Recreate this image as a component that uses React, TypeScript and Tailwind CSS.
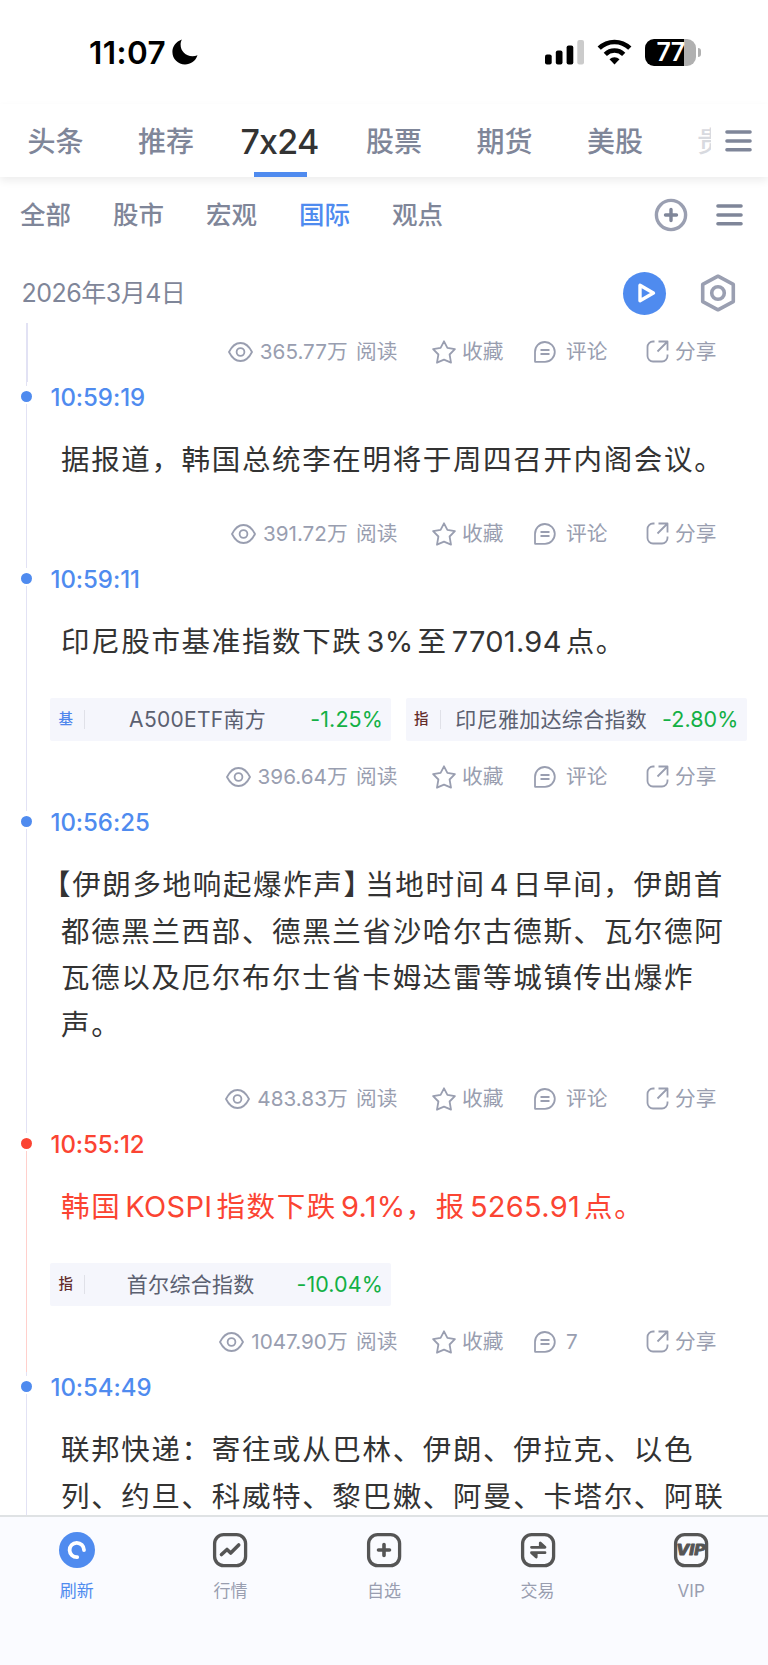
import type { ReactNode } from "react";

type Quote = { tag: string; tagColor: string; name: string; change: string };

type NewsItem = {
  time: string;
  lines: string[];
  reads?: string;
  comments?: string;
  important?: boolean;
  quotes?: Quote[];
};

const channels = ["头条", "推荐", "7x24", "股票", "期货", "美股"];
const filters = ["全部", "股市", "宏观", "国际", "观点"];

const news: NewsItem[] = [
  { time: "10:59:19", lines: ["据报道，韩国总统李在明将于周四召开内阁会议。"], reads: "391.72万" },
  {
    time: "10:59:11",
    lines: ["印尼股市基准指数下跌3%至7701.94点。"],
    reads: "396.64万",
    quotes: [
      { tag: "基", tagColor: "text-[#4f86ec]", name: "A500ETF南方", change: "-1.25%" },
      { tag: "指", tagColor: "text-[#642d2b]", name: "印尼雅加达综合指数", change: "-2.80%" },
    ],
  },
  {
    time: "10:56:25",
    lines: [
      "【伊朗多地响起爆炸声】当地时间4日早间，伊朗首",
      "都德黑兰西部、德黑兰省沙哈尔古德斯、瓦尔德阿",
      "瓦德以及厄尔布尔士省卡姆达雷等城镇传出爆炸",
      "声。",
    ],
    reads: "483.83万",
  },
  {
    time: "10:55:12",
    lines: ["韩国KOSPI指数下跌9.1%，报5265.91点。"],
    reads: "1047.90万",
    comments: "7",
    important: true,
    quotes: [{ tag: "指", tagColor: "text-[#642d2b]", name: "首尔综合指数", change: "-10.04%" }],
  },
  {
    time: "10:54:49",
    lines: ["联邦快递：寄往或从巴林、伊朗、伊拉克、以色", "列、约旦、科威特、黎巴嫩、阿曼、卡塔尔、阿联"],
  },
];

function MenuIcon() {
  return (
    <svg className="block h-[24px] w-[27px]" viewBox="0 0 27 24" stroke="#7f8699" strokeWidth="3.4" strokeLinecap="round">
      <path d="M1.9 3h23.2M1.9 12h23.2M1.9 20.8h23.2" />
    </svg>
  );
}

function StatusBar() {
  return (
    <div className="flex h-[104px] items-center pl-[89px] pr-[67px] text-black">
      <span className="pt-[2px] text-[31.5px] font-semibold leading-[40px] tracking-[0.4px]">11:07</span>
      <svg className="ml-[6px] h-[26px] w-[26px]" viewBox="0 0 26 26">
        <path d="M10 0.600C3.800 2.600 0.400 7.600 0.400 13c0 7 5.600 12.400 12.600 12.400 5.600 0 10.600-3.400 12.500-9.200-1.600 0.700-3.300 1-5 1C13.600 17.200 8.600 12.300 8.600 5.600c0-1.800 0.500-3.600 1.400-5z" />
      </svg>
      <svg className="ml-auto h-[25px] w-[39px]" viewBox="0 0 39 25">
        <rect x="0" y="14.500" width="6.700" height="10" rx="2" />
        <rect x="10.800" y="10.500" width="6.700" height="14" rx="2" />
        <rect x="21.600" y="5.500" width="6.700" height="19" rx="2" />
        <rect x="32.300" y="0" width="6.700" height="24.500" rx="2" fill="#cbcbcb" />
      </svg>
      <svg className="ml-[13px] h-[26px] w-[35px]" viewBox="0 0 35 26" fill="none" stroke="black" strokeWidth="4.600">
        <path d="M2.200 9.200a21.800 21.800 0 0 1 30.600 0" />
        <path d="M8.300 15.300a13.200 13.200 0 0 1 18.400 0" />
        <path d="M17.500 25.500l-5-5.200a7.300 7.300 0 0 1 10 0z" fill="black" stroke="none" />
      </svg>
      <div className="ml-[13px] flex items-center">
        <div className="flex h-[27px] w-[51px] items-center justify-center overflow-hidden rounded-[9px] bg-gradient-to-r from-black from-[77%] to-[#b0b0b0] to-[77%]">
          <span className="pt-px text-[25px] font-semibold leading-none tracking-[-0.6px] text-white">77</span>
        </div>
        <div className="ml-[2px] h-[9px] w-[3px] rounded-r-full bg-[#b0b0b0]" />
      </div>
    </div>
  );
}

function ChannelTabs() {
  return (
    <nav className="flex h-[73px] items-center pl-[27.5px] text-[#7f8699] shadow-[0_4px_8px_rgba(0,0,0,0.07)]">
      {channels.map((name) =>
        name === "7x24" ? (
          <div key={name} className="relative flex h-full w-[118px] items-center justify-start">
            <span className="-ml-[7.5px] pt-[2px] text-[34px] font-medium tracking-[-0.8px] text-[#333]">{name}</span>
            <span className="absolute bottom-0 left-[5.5px] h-[5px] w-[53px] bg-[#4f8bef]" />
          </div>
        ) : (
          <span key={name} className={`pt-[3px] text-[28px] font-medium ${name === "推荐" ? "w-[110px]" : name === "美股" ? "w-[111px]" : "w-[110.5px]"}`}>
            {name}
          </span>
        ),
      )}
      <div className="w-[13px] overflow-hidden whitespace-nowrap pt-[3px] text-[28px] font-medium opacity-30">
        <span className="-ml-px">贵</span>
      </div>
      <div className="ml-[14px]">
        <MenuIcon />
      </div>
    </nav>
  );
}

function FilterTabs() {
  return (
    <div className="flex h-[76px] items-center pl-[20px] text-[25.5px] text-[#7f8699]">
      {filters.map((name) => (
        <span key={name} className={`w-[93px] pt-px font-medium ${name === "国际" ? "text-[#4f8bef]" : ""}`}>
          {name}
        </span>
      ))}
      <svg className="ml-[169px] h-[34px] w-[34px]" viewBox="0 0 34 34" fill="none" stroke="#9a9fb1" strokeWidth="3.400" strokeLinecap="round">
        <circle cx="17" cy="17" r="14.600" />
        <path d="M17 11.500v11M11.500 17h11" stroke="#7f8699" />
      </svg>
      <div className="ml-[28px]">
        <MenuIcon />
      </div>
    </div>
  );
}

function DateRow() {
  return (
    <div className="flex h-[70px] items-center pl-[21.5px] pt-[10px]">
      <span className="w-[601.5px] pt-[2px] text-[25px] tracking-[-0.5px] text-[#7f8699]">2026年3月4日</span>
      <div className="flex h-[43px] w-[43px] items-center justify-center rounded-full bg-[#4f8bef]">
        <svg className="ml-[4px] h-[20px] w-[18px]" viewBox="0 0 18 20" fill="none" stroke="white" strokeWidth="3.400" strokeLinejoin="round">
          <path d="M2 2.300v15.400L15.400 10z" />
        </svg>
      </div>
      <svg className="ml-[34px] h-[38px] w-[36px]" viewBox="0 0 36 38" fill="none" stroke="#9a9fb1" strokeWidth="3.600">
        <path d="M18 2.200l15.300 8.200v17.200L18 35.800 2.700 27.600V10.400z" strokeLinejoin="round" />
        <circle cx="18" cy="19" r="6.300" />
      </svg>
    </div>
  );
}

function MetaRow({ reads, comments = "评论" }: { reads: string; comments?: string }) {
  return (
    <div className="flex h-[30px] items-center text-[20.7px] leading-[30px] text-[#999eb0]">
      <div className="flex w-[431.5px] items-center justify-end pr-[34px]">
        <svg className="mr-[7px] h-[20px] w-[25px]" viewBox="0 0 25 20" fill="none" stroke="currentColor" strokeWidth="1.800">
          <path d="M1 10C4 4 8 1 12.500 1S21 4 24 10c-3 6-7 9-11.500 9S4 16 1 10z" strokeLinejoin="round" />
          <circle cx="12.500" cy="10" r="3.900" />
        </svg>
        <span>{reads}</span>
        <span className="ml-[8.5px]">阅读</span>
      </div>
      <div className="flex w-[101.5px] items-center">
        <svg className="mr-[6.5px] h-[24px] w-[24px]" viewBox="0 0 24 24" fill="none" stroke="currentColor" strokeWidth="1.800" strokeLinejoin="round">
          <path d="M12 1.300l3.400 6.500 7.500 1.300-5.300 5.400 1.400 8.200-7-3-7 3 1.400-8.200L1.100 9.100l7.500-1.300z" />
        </svg>
        收藏
      </div>
      <div className="flex w-[113px] items-center">
        <svg className="mr-[10px] h-[22px] w-[23px]" viewBox="0 0 23 22" fill="none" stroke="currentColor" strokeWidth="1.800" strokeLinejoin="round">
          <path d="M2.200 20.800H12A9.900 9.900 0 1 0 2 11v9.600z" />
          <path d="M7.500 9h9M7.500 13h9" />
        </svg>
        {comments}
      </div>
      <div className="flex items-center">
        <svg className="mr-[6px] h-[23px] w-[23px]" viewBox="0 0 23 23" fill="none" stroke="currentColor" strokeWidth="1.800" strokeLinejoin="round">
          <path d="M8.500 1.500H7a5.500 5.500 0 0 0-5.500 5.500v9A5.500 5.500 0 0 0 7 21.500h9a5.500 5.500 0 0 0 5.500-5.500v-1.500" />
          <path d="M12.500 1.500h9v9M21.500 1.500L11.500 11.500" />
        </svg>
        分享
      </div>
    </div>
  );
}

function QuoteChip({ quote }: { quote: Quote }) {
  return (
    <div className="flex h-[43px] w-[341px] items-center rounded-[2px] bg-[#f5f6fc] pr-[8px]">
      <span className={`w-[34px] pl-[8.5px] text-[14.5px] font-medium ${quote.tagColor}`}>{quote.tag}</span>
      <span className="h-[19px] w-px bg-[#e0e1e8]" />
      <span className="flex-1 pt-px text-center text-[21px] tracking-[0.3px] text-[#5b6070]">{quote.name}</span>
      <span className="text-[21.5px] tracking-[0.1px] text-[#13b045]">{quote.change}</span>
    </div>
  );
}

// latin and digit runs get a little air next to the han characters,
// full-width brackets are pulled in on their empty side
function spaced(line: string): ReactNode[] {
  return line.split(/([A-Za-z0-9.%]+|【|】)/).map((part, i, parts) => {
    if (i % 2 === 0) return part;
    if (part === "【") return <span key={i} className="-ml-[19px]">{part}</span>;
    if (part === "】") return <span key={i} className="-mr-[8.5px]">{part}</span>;
    const beforeComma = parts[i + 1].startsWith("，");
    return (
      <span key={i} className={`ml-[4px] text-[29px] tracking-[0.3px] ${beforeComma ? "" : "mr-[4px]"}`}>
        {part}
      </span>
    );
  });
}

function NewsEntry({ item }: { item: NewsItem }) {
  const accent = item.important ? "text-[#fb4432]" : "text-[#4f8bef]";
  return (
    <article className="flex">
      <div className="flex w-[53px] shrink-0 flex-col items-center">
        <span className="h-[4px] w-[1.5px] bg-[#e2e2f4]" />
        <span className={`mb-[2px] mt-[5px] h-[11px] w-[11px] rounded-full ${item.important ? "bg-[#fb4432]" : "bg-[#4f8bef]"}`} />
        <span className={`w-[1.5px] flex-1 ${item.important ? "bg-[#ffd0cc]" : "bg-[#e2e2f4]"}`} />
      </div>
      <div className="-ml-[2.5px] shrink-0">
        <div className={`h-[30px] pt-px text-[24px] font-medium leading-[30px] tracking-[-0.05px] ${accent}`}>{item.time}</div>
        <div className={`ml-[10.5px] mt-[25px] whitespace-nowrap text-[28.5px] leading-[46.6px] tracking-[1.65px] ${item.important ? "text-[#fb4432]" : "text-[#333]"}`}>
          {item.lines.map((line) => (
            <div key={line} className="h-[46.6px]">{spaced(line)}</div>
          ))}
        </div>
        {item.quotes && (
          <div className="-ml-[0.5px] mt-[32px] flex gap-[14.5px]">
            {item.quotes.map((quote) => (
              <QuoteChip key={quote.name} quote={quote} />
            ))}
          </div>
        )}
        {item.reads && (
          <div className={`-ml-[50.5px] mb-[15.5px] ${item.quotes ? "mt-[21px]" : "mt-[35px]"}`}>
            <MetaRow reads={item.reads} comments={item.comments} />
          </div>
        )}
      </div>
    </article>
  );
}

function BoxIcon({ children }: { children: ReactNode }) {
  return (
    <svg className="h-[36px] w-[36px]" viewBox="0 0 36 36" fill="none" stroke="#555" strokeWidth="3.300" strokeLinecap="round" strokeLinejoin="round">
      <rect x="2.600" y="2.600" width="31" height="31" rx="9" />
      {children}
    </svg>
  );
}

function BottomBar() {
  const tabs = [
    {
      label: "刷新",
      icon: (
        <svg className="h-[36px] w-[36px]" viewBox="0 0 36 36" fill="none" stroke="white" strokeWidth="3.800" strokeLinecap="round">
          <circle cx="18" cy="18" r="18" fill="#4f8bef" stroke="none" />
          <path d="M25 18a7.200 7.200 0 1 0-6.800 7.200" />
        </svg>
      ),
    },
    { label: "行情", icon: <BoxIcon><path d="M9.500 22.500l5.500-5 3.700 3.500 8-8" strokeWidth="3.600" /></BoxIcon> },
    { label: "自选", icon: <BoxIcon><path d="M18 12.500v11M12.500 18h11" strokeWidth="3.600" /></BoxIcon> },
    { label: "交易", icon: <BoxIcon><path d="M11.500 15.300h13.500l-4.700-4.300v4M25 20.700H11.500l4.700 4.300v-4" strokeWidth="2.800" /></BoxIcon> },
    {
      label: "VIP",
      icon: (
        <BoxIcon>
          <text x="3" y="23" fontSize="14" fontWeight="800" fontStyle="italic" fill="#555" strokeWidth="0.800" textLength="29.500" lengthAdjust="spacingAndGlyphs">VIP</text>
        </BoxIcon>
      ),
    },
  ];
  return (
    <footer className="flex h-[150px] shrink-0 border-t-2 border-[#dfe2e4] bg-[#fafbff]">
      {tabs.map((tab, i) => (
        <div key={tab.label} className="flex flex-1 flex-col items-center pt-[15px]">
          {tab.icon}
          <span className={`mt-[10px] text-[17px] leading-[26px] ${i === 0 ? "text-[#4f8bef]" : "text-[#999eb0]"}`}>{tab.label}</span>
        </div>
      ))}
    </footer>
  );
}

export default function App() {
  return (
    <div lang="zh-CN" className="flex h-[1665px] w-[768px] flex-col overflow-hidden bg-white font-['Inter','Noto_Sans_CJK_SC',sans-serif]">
      <StatusBar />
      <ChannelTabs />
      <FilterTabs />
      <DateRow />
      <main className="min-h-0 flex-1 overflow-hidden">
        <div className="relative flex h-[59px] items-center pb-[2px]">
          <span className="absolute left-[26px] top-0 h-full w-[1.5px] bg-[#e2e2f4]" />
          <MetaRow reads="365.77万" />
        </div>
        {news.map((item) => (
          <NewsEntry key={item.time} item={item} />
        ))}
      </main>
      <BottomBar />
    </div>
  );
}
